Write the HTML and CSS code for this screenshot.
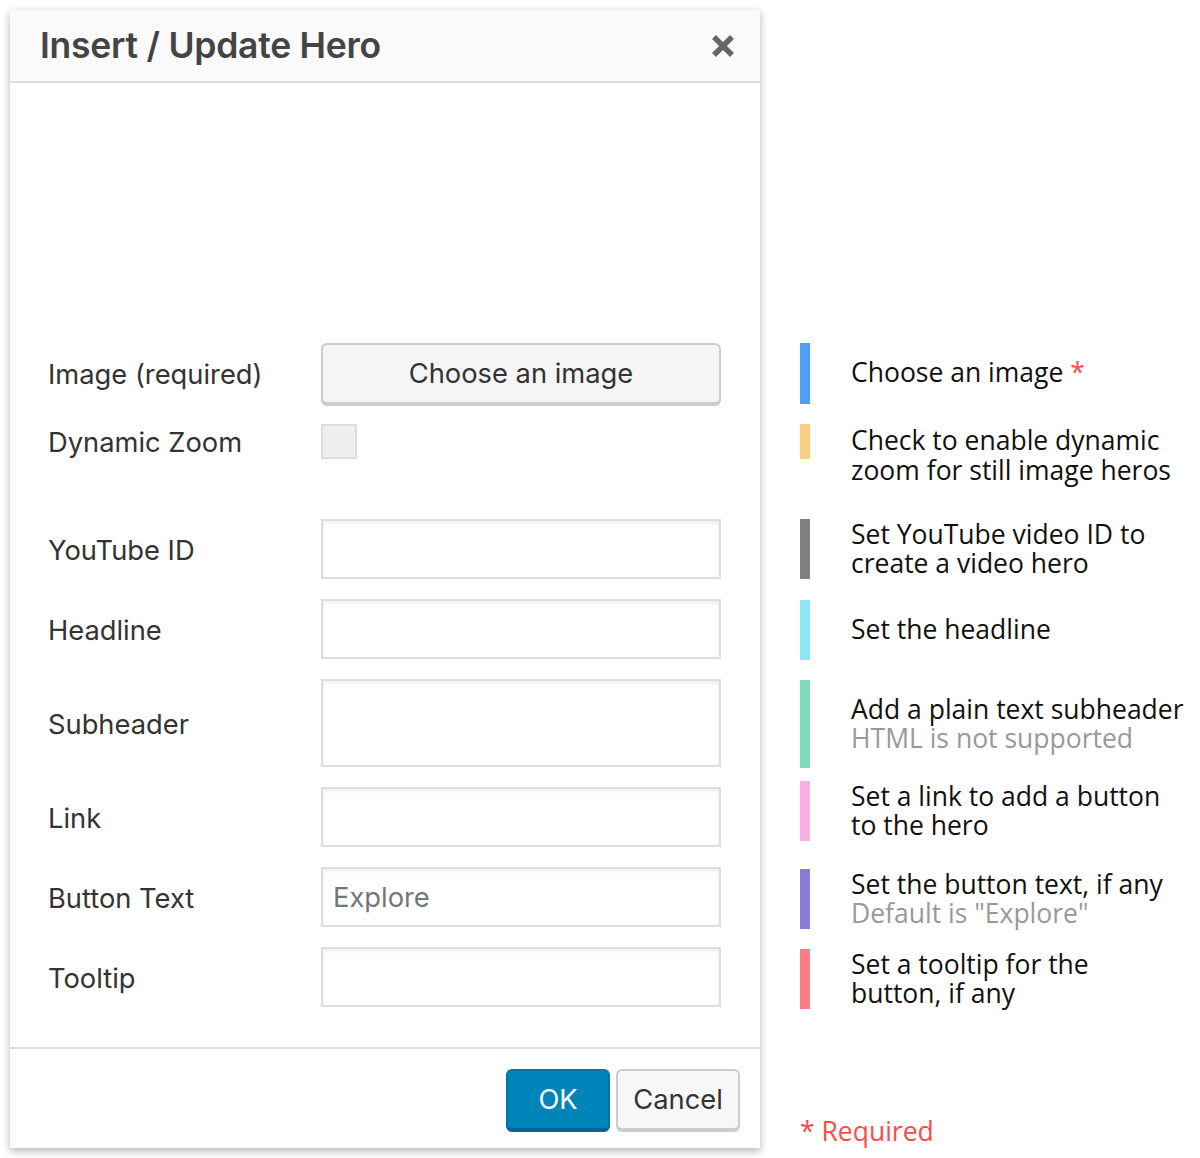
FILE: index.html
```html
<!DOCTYPE html>
<html>
<head>
<meta charset="utf-8">
<link rel="stylesheet" href="styles.css">
</head>
<body>
<div class="page">
  <div class="dialog">
    <div class="dlg-head">
      <h1 class="dlg-title">Insert / Update Hero</h1>
      <span class="dlg-close">
        <svg width="24" height="24" viewBox="0 0 24 24"><path d="M3 3 L21 21 M21 3 L3 21" stroke="#666" stroke-width="5.5" fill="none"/></svg>
      </span>
    </div>
    <div class="dlg-body">
      <div class="row row-btn">
        <label class="lbl">Image (required)</label>
        <button class="choose">Choose an image</button>
      </div>
      <div class="row row-check">
        <label class="lbl">Dynamic Zoom</label>
        <span class="check"></span>
      </div>
      <div class="row">
        <label class="lbl">YouTube ID</label>
        <input class="field" type="text">
      </div>
      <div class="row">
        <label class="lbl">Headline</label>
        <input class="field" type="text">
      </div>
      <div class="row">
        <label class="lbl">Subheader</label>
        <textarea class="field field-tall"></textarea>
      </div>
      <div class="row">
        <label class="lbl">Link</label>
        <input class="field" type="text">
      </div>
      <div class="row">
        <label class="lbl">Button Text</label>
        <input class="field" type="text" placeholder="Explore">
      </div>
      <div class="row">
        <label class="lbl">Tooltip</label>
        <input class="field" type="text">
      </div>
    </div>
    <div class="dlg-foot">
      <button class="btn-ok">OK</button>
      <button class="btn-cancel">Cancel</button>
    </div>
  </div>

  <div class="notes">
    <div class="note n1"><span class="bar blue"></span><div class="ntext">Choose an image <span class="req">*</span></div></div>
    <div class="note n2"><span class="bar yellow"></span><div class="ntext">Check to enable dynamic<br>zoom for still image heros</div></div>
    <div class="note n3"><span class="bar gray"></span><div class="ntext">Set YouTube video ID to<br>create a video hero</div></div>
    <div class="note n4"><span class="bar cyan"></span><div class="ntext">Set the headline</div></div>
    <div class="note n5"><span class="bar green"></span><div class="ntext">Add a plain text subheader<br><span class="muted">HTML is not supported</span></div></div>
    <div class="note n6"><span class="bar pink"></span><div class="ntext">Set a link to add a button<br>to the hero</div></div>
    <div class="note n7"><span class="bar purple"></span><div class="ntext">Set the button text, if any<br><span class="muted">Default is "Explore"</span></div></div>
    <div class="note n8"><span class="bar red"></span><div class="ntext">Set a tooltip for the<br>button, if any</div></div>
    <div class="required">* Required</div>
  </div>
</div>
</body>
</html>
```

FILE: styles.css
```css
html, body {
  margin: 0;
  padding: 0;
  background: #fff;
}
.page {
  display: flex;
  align-items: flex-start;
  padding: 10px;
}
.dialog {
  width: 750px;
  height: 1138px;
  display: flex;
  flex-direction: column;
  background: #fff;
  box-shadow: 0 3px 8px rgba(0,0,0,0.3);
  font-family: "Inter", "Liberation Sans", sans-serif;
  color: #333;
}
.dlg-head {
  height: 73px;
  background: #fafafa;
  border-bottom: 2px solid #ddd;
  display: flex;
  align-items: center;
  justify-content: space-between;
  padding: 0 25px 0 30px;
  box-sizing: border-box;
  flex: none;
}
.dlg-title {
  margin: 0 0 1px 0;
  font-size: 35.5px;
  font-weight: 600;
  color: #444;
  letter-spacing: -0.25px;
}
.dlg-close {
  display: flex;
  width: 24px;
  height: 24px;
}
.dlg-body {
  flex: 1;
  padding: 260px 39px 0 38px;
  display: flex;
  flex-direction: column;
  gap: 20px;
}
.row {
  display: flex;
  align-items: center;
  justify-content: space-between;
}
.row-check { margin-bottom: 40px; }
.lbl {
  font-size: 27.3px;
  color: #333;
  padding-top: 2px;
}
.choose {
  width: 400px;
  height: 61px;
  background: #f5f5f5;
  border: 2px solid #ccc;
  border-radius: 6px;
  box-shadow: 0 2px 0 #ccc;
  font-family: inherit;
  font-size: 27.3px;
  color: #333;
  padding: 0;
}
.check {
  display: block;
  width: 36px;
  height: 35px;
  box-sizing: border-box;
  border: 2px solid #ddd;
  background: #efefef;
  margin-right: 364px;
}
.field {
  width: 400px;
  height: 60px;
  box-sizing: border-box;
  border: 2px solid #ddd;
  box-shadow: inset 0 2px 4px rgba(0,0,0,0.07);
  background: #fff;
  font-family: inherit;
  font-size: 27.3px;
  padding: 0 10px;
  color: #333;
  margin: 0;
  resize: none;
  outline: none;
}
.field::placeholder { color: #72777c; }
.field-tall { height: 88px; }
.dlg-foot {
  flex: none;
  height: 101px;
  box-sizing: border-box;
  border-top: 2px solid #ddd;
  padding: 20px 20px 0 0;
  display: flex;
  justify-content: flex-end;
  align-items: flex-start;
  gap: 6px;
}
.btn-ok {
  width: 104px;
  height: 61px;
  background: #0085ba;
  border: 2px solid #0073aa;
  border-bottom-color: #006799;
  box-shadow: 0 2px 0 #006799;
  border-radius: 6px;
  color: #fff;
  font-family: inherit;
  font-size: 27.3px;
  padding: 0;
}
.btn-cancel {
  width: 124px;
  height: 61px;
  background: #f7f7f7;
  border: 2px solid #ccc;
  box-shadow: 0 2px 0 #ccc;
  border-radius: 6px;
  color: #333;
  font-family: inherit;
  font-size: 27.3px;
  padding: 0;
}

/* annotations */
.notes {
  margin-left: 40px;
  padding-top: 333px;
  display: flex;
  flex-direction: column;
  font-family: "Open Sans", sans-serif;
  font-size: 26.5px;
  line-height: 29.5px;
  color: #111;
}
.note {
  display: flex;
  align-items: center;
  white-space: nowrap;
}
.bar {
  display: block;
  width: 10px;
  flex: none;
  align-self: flex-start;
}
.ntext { margin-left: 41px; }
.n1 { height: 61px; }
.n1 .bar { height: 61px; }
.n1 .ntext { margin-top: -2px; }
.n2 { height: 35px; margin-top: 20px; align-items: flex-start; }
.n2 .bar { height: 35px; }
.n2 .ntext { margin-top: 2px; }
.n3 { height: 60px; margin-top: 60px; }
.n3 .bar { height: 60px; }
.n4 { height: 60px; margin-top: 21px; }
.n4 .bar { height: 60px; }
.n5 { height: 88px; margin-top: 20px; }
.n5 .bar { height: 88px; }
.n6 { height: 60px; margin-top: 13px; }
.n6 .bar { height: 60px; }
.n7 { height: 60px; margin-top: 28px; }
.n7 .bar { height: 60px; }
.n8 { height: 60px; margin-top: 20px; }
.n8 .bar { height: 60px; }
.blue { background: #4f9ef8; }
.yellow { background: #f7cf7f; }
.gray { background: #808080; }
.cyan { background: #8be6f5; }
.green { background: #7ddbbb; }
.pink { background: #fcaee5; }
.purple { background: #8a7ad9; }
.red { background: #fb7d86; }
.muted { color: #999; }
.req { color: #ff4a4a; }
.required {
  margin-top: 108px;
  color: #ff4a4a;
}
```
